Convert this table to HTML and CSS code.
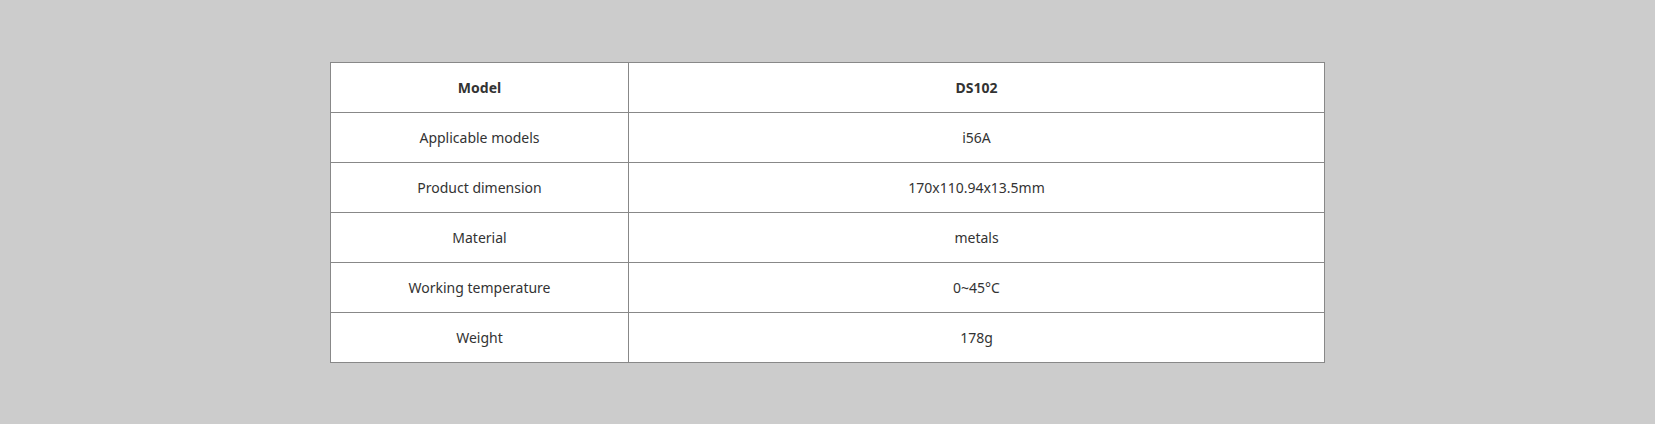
FILE: index.html
```html
<!DOCTYPE html>
<html>
<head>
<meta charset="utf-8">
<link rel="stylesheet" href="styles.css">
</head>
<body>
<div class="page">
<table class="spec">
<tr class="head"><td class="c1">Model</td><td>DS102</td></tr>
<tr><td class="c1">Applicable models</td><td>i56A</td></tr>
<tr><td class="c1">Product dimension</td><td>170x110.94x13.5mm</td></tr>
<tr><td class="c1">Material</td><td>metals</td></tr>
<tr><td class="c1">Working temperature</td><td>0~45°C</td></tr>
<tr><td class="c1">Weight</td><td>178g</td></tr>
</table>
</div>
</body>
</html>
```
FILE: styles.css
```css
html, body {
  margin: 0;
  padding: 0;
  background: #cccccc;
}
.page {
  height: 424px;
  padding-top: 62px;
  box-sizing: border-box;
  display: flex;
  justify-content: center;
  align-items: flex-start;
}
.spec {
  border-collapse: collapse;
  width: 995px;
  background: #ffffff;
  font-family: "Noto Sans", "Open Sans", sans-serif;
  font-size: 14px;
  color: #333333;
}
.spec td {
  border: 1px solid #888888;
  height: 49px;
  padding: 0;
  text-align: center;
  vertical-align: middle;
}
.spec td.c1 {
  width: 297px;
}
.spec .head td {
  font-weight: bold;
}
```
